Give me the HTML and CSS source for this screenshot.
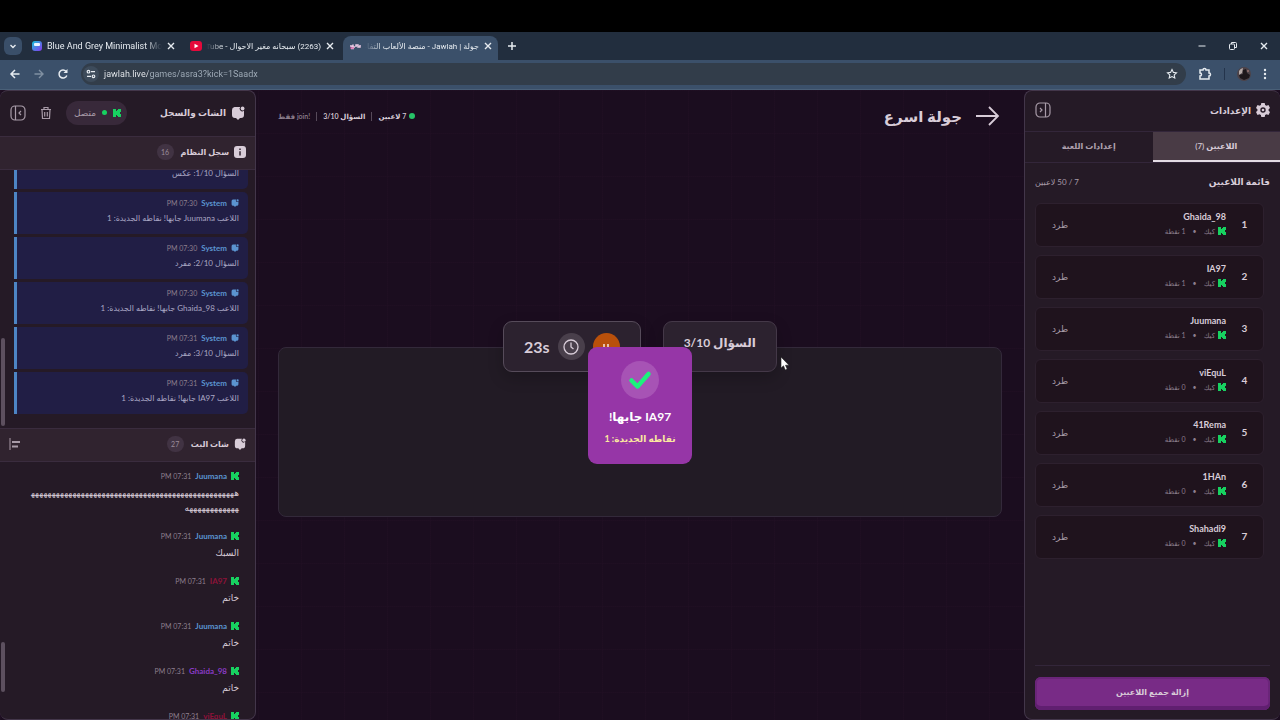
FILE: index.html
```
<!DOCTYPE html>
<html lang="ar" dir="rtl">

<head>
    <meta charset="UTF-8">
    <meta name="viewport" content="width=device-width, initial-scale=1.0">
    <title>جولة | Jawlah - منصة الألعاب التفاعلية</title>
    <link rel="stylesheet" href="styles.css">
</head>

<body>
    <svg class="sprite" aria-hidden="true">
        <symbol id="kick" viewBox="0 0 8 8"><path fill="#17d160" d="M0 0h3v2h1V1h1V0h3v3H7v1H6v0h1v1h1v3H5V7H4V6H3v2H0z"/></symbol>
        <symbol id="chat" viewBox="0 0 14 14"><path fill="currentColor" d="M3.500 1h5.800a2.300 2.300 0 0 0 3.700 3.500V9a3 3 0 0 1-3 3H9l-2 2-2-2H4a3 3 0 0 1-3-3V4a3 3 0 0 1 2.500-3z"/><circle cx="11.600" cy="2.500" r="1.900" fill="currentColor"/></symbol>
        <symbol id="close" viewBox="0 0 10 10"><path d="M2 2l6 6M8 2l-6 6" stroke="currentColor" stroke-width="1.400" fill="none"/></symbol>
        <symbol id="panel" viewBox="0 0 16 16"><g fill="none" stroke="currentColor" stroke-width="1.200"><rect x="1" y="1" width="14" height="14" rx="4"/><path d="M10.500 1v14M5 6l2 2-2 2"/></g></symbol>
    </svg>

    <div class="top-space"></div>

    <div class="tab-strip" dir="ltr">
        <button class="tab-search" aria-label="Search tabs"><svg width="10" height="10" viewBox="0 0 10 10"><path d="M2.500 4L5 6.500 7.500 4" fill="none" stroke="currentColor" stroke-width="1.400"/></svg></button>
        <div class="tab">
            <svg class="favicon" viewBox="0 0 12 12"><defs><linearGradient id="fav" x1="0" y1="0" x2="1" y2="1"><stop offset="0" stop-color="#12c7d8"/><stop offset="1" stop-color="#8b35f0"/></linearGradient></defs><rect x="1" y="1" width="10" height="10" rx="3" fill="url(#fav)"/><rect x="3" y="3" width="6" height="3" rx="1" fill="#e8f4ff"/></svg>
            <span class="tab-title" dir="ltr">Blue And Grey Minimalist Modern</span>
            <button class="tab-close" aria-label="Close"><svg width="10" height="10"><use href="#close"/></svg></button>
        </div>
        <div class="tab second">
            <svg class="favicon" viewBox="0 0 12 12"><rect x="0" y="1" width="12" height="10" rx="3" fill="#e5093b"/><path d="M4.500 3.700v4.600L8.500 6z" fill="#fff"/></svg>
            <span class="tab-title" dir="rtl">(2263) سبحانه مغير الاحوال - YouTube</span>
            <button class="tab-close" aria-label="Close"><svg width="10" height="10"><use href="#close"/></svg></button>
        </div>
        <div class="tab active">
            <svg class="favicon" viewBox="0 0 12 12"><path d="M1 6h2v1.500M4 4.500v2.500h2M7 7V5h2v2h2V5M2 8.500h3" fill="none" stroke="#e9c9e4" stroke-width="1.500"/><path d="M1 8h4" stroke="#d84a9a"/></svg>
            <span class="tab-title" dir="rtl">جولة | Jawlah - منصة الألعاب التفاعلية</span>
            <button class="tab-close" aria-label="Close"><svg width="10" height="10"><use href="#close"/></svg></button>
        </div>
        <button class="new-tab" aria-label="New tab"><svg width="12" height="12" viewBox="0 0 12 12"><path d="M6 2v8M2 6h8" stroke="currentColor" stroke-width="1.500"/></svg></button>
        <div class="window-buttons">
            <button aria-label="Minimize"><svg width="10" height="10" viewBox="0 0 10 10"><path d="M1.500 5h7" stroke="currentColor"/></svg></button>
            <button aria-label="Restore"><svg width="10" height="10" viewBox="0 0 10 10"><g fill="none" stroke="currentColor"><rect x="1.500" y="3" width="5" height="5.500" rx="1"/><path d="M3.500 3V1.500h4a1 1 0 0 1 1 1v4H7"/></g></svg></button>
            <button aria-label="Close window"><svg width="10" height="10"><use href="#close"/></svg></button>
        </div>
    </div>

    <div class="toolbar" dir="ltr">
        <button aria-label="Back"><svg width="12" height="12" viewBox="0 0 12 12"><path d="M10.500 6H2M6 2L2 6l4 4" fill="none" stroke="currentColor" stroke-width="1.500"/></svg></button>
        <button class="dim" aria-label="Forward"><svg width="12" height="12" viewBox="0 0 12 12"><path d="M1.500 6H10M6 2l4 4-4 4" fill="none" stroke="currentColor" stroke-width="1.400"/></svg></button>
        <button aria-label="Reload"><svg width="12" height="12" viewBox="0 0 12 12"><path d="M9.800 7.500A4 4 0 1 1 9 3.300" fill="none" stroke="currentColor" stroke-width="1.500"/><path d="M10.500 1v4h-4z" fill="currentColor"/></svg></button>
        <div class="address">
            <button class="site-info" aria-label="Site information"><svg width="10" height="10" viewBox="0 0 10 10"><g fill="none" stroke="currentColor" stroke-width="1.200"><circle cx="2.500" cy="2.700" r="1.300"/><path d="M5 2.700h4M1 7.300h4"/><circle cx="7.500" cy="7.300" r="1.300"/></g></svg></button>
            <input class="url" type="text" aria-label="Address" value="jawlah.live/games/asra3?kick=1Saadx">
            <button aria-label="Bookmark"><svg width="12" height="12" viewBox="0 0 12 12"><path d="M6 1.500l1.400 2.900 3.100.4-2.300 2.100.6 3.100L6 8.500 3.200 10l.6-3.100L1.500 4.800l3.100-.4z" fill="none" stroke="currentColor" stroke-width="1.100"/></svg></button>
        </div>
        <button aria-label="Extensions"><svg width="14" height="14" viewBox="0 0 14 14"><path d="M2 3h3a1.500 1.500 0 0 1 3 0h3v3a1.500 1.500 0 0 1 0 3v3H2V9a1.500 1.500 0 0 0 0-3z" fill="none" stroke="currentColor" stroke-width="1.500"/></svg></button>
        <span class="toolbar-line"></span>
        <button aria-label="Profile"><svg width="14" height="14" viewBox="0 0 14 14"><circle cx="7" cy="7" r="7" fill="#4c4248"/><path d="M2 4a6 6 0 0 1 4-3l-1 5-3 2z" fill="#b5aaa8"/><path d="M6 3l3-1 1 4 3 2-1 3-5 2-4-2-1-3 4-1z" fill="#1d171b"/><circle cx="11" cy="4" r="1" fill="#93706e"/></svg></button>
        <button aria-label="Menu"><svg width="4" height="12" viewBox="0 0 4 12"><g fill="currentColor"><circle cx="2" cy="2" r="1.200"/><circle cx="2" cy="6" r="1.200"/><circle cx="2" cy="10" r="1.200"/></g></svg></button>
    </div>

    <div class="app">
        <aside class="side settings">
            <header class="side-header">
                <h2><svg width="14" height="14" viewBox="0 0 14 14"><path fill="currentColor" fill-rule="evenodd" d="M5.300 0h3.400l.4 2 1.400.8 2-.7 1.500 2.800L12.600 6.200v1.600L14 9.100l-1.500 2.800-2-.7-1.400.8-.4 2H5.300l-.4-2-1.400-.8-2 .7L0 9.100l1.400-1.300V6.200L0 4.900l1.500-2.800 2 .7L4.900 2zM7 4.300a2.700 2.700 0 1 0 0 5.400 2.700 2.700 0 0 0 0-5.400z"/><circle cx="7" cy="7" r="1.300" fill="currentColor"/></svg>الإعدادات</h2>
                <button class="icon-button" aria-label="طي"><svg width="16" height="16"><use href="#panel"/></svg></button>
            </header>
            <div class="settings-tabs" role="tablist">
                <button class="selected" role="tab" aria-selected="true">اللاعبين (7)</button>
                <button role="tab" aria-selected="false">إعدادات اللعبة</button>
            </div>
            <div class="list-title">
                <h3>قائمة اللاعبين</h3>
                <span>7 / 50 لاعبين</span>
            </div>
            <ol class="players">
                <li class="player"><b class="rank">1</b><div class="who"><strong>Ghaida_98</strong><small><svg><use href="#kick"/></svg>كيك <i>•</i> 1 نقطة</small></div><button>طرد</button></li>
                <li class="player"><b class="rank">2</b><div class="who"><strong>IA97</strong><small><svg><use href="#kick"/></svg>كيك <i>•</i> 1 نقطة</small></div><button>طرد</button></li>
                <li class="player"><b class="rank">3</b><div class="who"><strong>Juumana</strong><small><svg><use href="#kick"/></svg>كيك <i>•</i> 1 نقطة</small></div><button>طرد</button></li>
                <li class="player"><b class="rank">4</b><div class="who"><strong>viEquL</strong><small><svg><use href="#kick"/></svg>كيك <i>•</i> 0 نقطة</small></div><button>طرد</button></li>
                <li class="player"><b class="rank">5</b><div class="who"><strong>41Rema</strong><small><svg><use href="#kick"/></svg>كيك <i>•</i> 0 نقطة</small></div><button>طرد</button></li>
                <li class="player"><b class="rank">6</b><div class="who"><strong>1HAn</strong><small><svg><use href="#kick"/></svg>كيك <i>•</i> 0 نقطة</small></div><button>طرد</button></li>
                <li class="player"><b class="rank">7</b><div class="who"><strong>Shahadi9</strong><small><svg><use href="#kick"/></svg>كيك <i>•</i> 0 نقطة</small></div><button>طرد</button></li>
            </ol>
            <footer class="side-footer">
                <button class="remove-all">إزالة جميع اللاعبين</button>
            </footer>
        </aside>

        <main class="game">
            <header class="game-header">
                <h1><svg width="26" height="22" viewBox="0 0 26 22"><path d="M2 11h22M15 2l9 9-9 9" fill="none" stroke="currentColor" stroke-width="1.800"/></svg>جولة اسرع</h1>
                <div class="game-info">
                    <span class="online">7 لاعبين</span>
                    <span>السؤال 3/10</span>
                    <span class="muted">!join فقط</span>
                </div>
            </header>
            <div class="stage">
                <div class="stats">
                    <div class="stat question">السؤال 3/10</div>
                    <div class="stat timer">
                        <button class="pause" aria-label="إيقاف مؤقت"><svg width="8" height="8" viewBox="0 0 8 8"><path d="M2 1v6M6 1v6" stroke="#f3ddd0" stroke-width="1.600"/></svg></button>
                        <span class="clock"><svg width="18" height="18" viewBox="0 0 18 18"><g fill="none" stroke="currentColor" stroke-width="1.300"><circle cx="9" cy="9" r="7"/><path d="M9 4.500V9l2.500 2"/></g></svg></span>
                        <span dir="ltr">23s</span>
                    </div>
                </div>
                <div class="board">
                    <p class="word">مفرد</p>
                    <div class="popup">
                        <span class="check"><svg width="24" height="20" viewBox="0 0 24 20"><path d="M3.500 10.500l6 6L20.500 4" fill="none" stroke="#1cf27c" stroke-width="4.500" stroke-linecap="round" stroke-linejoin="round"/></svg></span>
                        <strong>IA97 جابها!</strong>
                        <em>نقاطه الجديدة: 1</em>
                    </div>
                </div>
            </div>
        </main>

        <aside class="side chat">
            <header class="side-header">
                <h2><svg width="14" height="14"><use href="#chat"/></svg>الشات والسجل</h2>
                <div class="actions">
                    <span class="status"><svg width="8" height="8"><use href="#kick"/></svg><i></i>متصل</span>
                    <button class="icon-button" aria-label="مسح"><svg width="12" height="14" viewBox="0 0 12 14"><g fill="none" stroke="currentColor" stroke-width="1.200"><path d="M1 3.500h10M4 3.500V1.500h4v2M2 3.500l.5 9h7l.5-9M4.700 6v4.500M7.300 6v4.500"/></g></svg></button>
                    <button class="icon-button flip" aria-label="طي"><svg width="16" height="16"><use href="#panel"/></svg></button>
                </div>
            </header>
            <div class="section-title">
                <h3><svg width="12" height="12" viewBox="0 0 12 12"><rect width="12" height="12" rx="3" fill="currentColor"/><path d="M6 2.500v1.500M6 5.200v4.300" stroke="#30232f" stroke-width="1.500"/></svg>سجل النظام</h3>
                <span class="count">16</span>
            </div>
            <div class="log">
                <article><div class="meta"><svg><use href="#chat"/></svg><b>System</b><time>07:30 PM</time></div><p>السؤال 1/10: عكس</p></article>
                <article><div class="meta"><svg><use href="#chat"/></svg><b>System</b><time>07:30 PM</time></div><p>اللاعب Juumana جابها! نقاطه الجديدة: 1</p></article>
                <article><div class="meta"><svg><use href="#chat"/></svg><b>System</b><time>07:30 PM</time></div><p>السؤال 2/10: مفرد</p></article>
                <article><div class="meta"><svg><use href="#chat"/></svg><b>System</b><time>07:30 PM</time></div><p>اللاعب Ghaida_98 جابها! نقاطه الجديدة: 1</p></article>
                <article><div class="meta"><svg><use href="#chat"/></svg><b>System</b><time>07:31 PM</time></div><p>السؤال 3/10: مفرد</p></article>
                <article><div class="meta"><svg><use href="#chat"/></svg><b>System</b><time>07:31 PM</time></div><p>اللاعب IA97 جابها! نقاطه الجديدة: 1</p></article>
                <span class="thumb"></span>
            </div>
            <div class="section-title">
                <h3><svg width="12" height="12"><use href="#chat"/></svg>شات البث</h3>
                <span class="count">27</span>
                <button class="icon-button align" aria-label="محاذاة"><svg width="12" height="12" viewBox="0 0 12 12"><path d="M1 0v12" stroke="currentColor"/><path d="M3 4h8M3 8.500h6" stroke="currentColor" stroke-width="2"/></svg></button>
            </div>
            <div class="messages">
                <article><div class="meta"><svg><use href="#kick"/></svg><b>Juumana</b><time>07:31 PM</time></div><p>ههههههههههههههههههههههههههههههههههههههههههههههههههههههههههههههه</p></article>
                <article><div class="meta"><svg><use href="#kick"/></svg><b>Juumana</b><time>07:31 PM</time></div><p>السبك</p></article>
                <article><div class="meta"><svg><use href="#kick"/></svg><b class="red">IA97</b><time>07:31 PM</time></div><p>خاتم</p></article>
                <article><div class="meta"><svg><use href="#kick"/></svg><b>Juumana</b><time>07:31 PM</time></div><p>خاتم</p></article>
                <article><div class="meta"><svg><use href="#kick"/></svg><b class="purple">Ghaida_98</b><time>07:31 PM</time></div><p>خاتم</p></article>
                <article><div class="meta"><svg><use href="#kick"/></svg><b class="red">viEquL</b><time>07:31 PM</time></div></article>
                <span class="thumb"></span>
            </div>
        </aside>
    </div>

    <svg class="pointer" width="12" height="16" viewBox="0 0 12 16"><path d="M1 1v11l2.500-2.200L5.200 14l2-.9-1.700-3.900H9z" fill="#fff" stroke="#222" stroke-width=".6"/></svg>
</body>

</html>
```

FILE: styles.css
```
* {
    box-sizing: border-box;
}

body {
    margin: 0;
    height: 100vh;
    display: flex;
    flex-direction: column;
    overflow: hidden;
    background: #000;
    color: #d8ccd8;
    font-family: Lato, "DejaVu Sans", sans-serif;
    font-size: 9px;
}

h1, h2, h3, p, ol {
    margin: 0;
    padding: 0;
}

button {
    border: none;
    padding: 0;
    background: none;
    color: inherit;
    font: inherit;
    cursor: pointer;
}

svg {
    display: block;
    flex: none;
}

.sprite {
    position: absolute;
    width: 0;
    height: 0;
}

/* browser window */
.top-space {
    height: 32px;
    flex: none;
}

.tab-strip {
    flex: none;
    height: 28px;
    display: flex;
    align-items: flex-end;
    padding-left: 4px;
    background: #222e3e;
    color: #e6ebf0;
    font-family: Roboto, "DejaVu Sans", sans-serif;
}

.tab-search {
    width: 18px;
    height: 18px;
    margin: 0 3px 5px 0;
    display: grid;
    place-items: center;
    border-radius: 6px;
    background: #3a4f69;
}

.tab {
    width: 159px;
    height: 24px;
    display: flex;
    align-items: center;
    gap: 4px;
    padding: 0 8px 4px 6px;
}

.tab.active {
    width: 155px;
    padding-right: 5px;
    border-radius: 8px 8px 0 0;
    background: #3b506a;
}

.favicon {
    width: 12px;
    height: 12px;
}

.tab-title {
    flex: 1;
    overflow: hidden;
    white-space: nowrap;
    -webkit-mask-image: linear-gradient(to right, #000 85%, transparent);
    mask-image: linear-gradient(to right, #000 85%, transparent);
}

.tab-title[dir="rtl"] {
    font-size: 8px;
    -webkit-mask-image: linear-gradient(to left, #000 85%, transparent);
    mask-image: linear-gradient(to left, #000 85%, transparent);
}

.new-tab {
    margin: 0 8px 8px;
}

.window-buttons {
    display: flex;
    gap: 21px;
    margin: 0 11px 9px auto;
}

.toolbar {
    flex: none;
    height: 30px;
    display: flex;
    align-items: center;
    gap: 12px;
    padding: 0 13px 2px 9px;
    background: #3b506a;
    border-bottom: 1px solid #4a6078;
    color: #e6ebf0;
}

.dim {
    color: #8090a2;
}

.address {
    flex: 1;
    height: 22px;
    display: flex;
    align-items: center;
    padding: 0 8px 0 2px;
    border-radius: 11px;
    background: #323d4a;
}

.site-info {
    width: 16px;
    height: 16px;
    display: grid;
    place-items: center;
    border-radius: 8px;
    background: #3d4b5b;
}

.url {
    flex: 1;
    min-width: 0;
    border: none;
    outline: none;
    padding: 0 5px;
    background: linear-gradient(to right, #f0f3f6 49px, #a4b0bc 49px);
    -webkit-background-clip: text;
    background-clip: text;
    color: transparent;
    font-family: Roboto, sans-serif;
    font-size: 9px;
}

.toolbar-line {
    width: 1px;
    height: 12px;
    background: #24344c;
}

/* page */
.app {
    flex: 1;
    min-height: 0;
    display: grid;
    grid-template-columns: 256px 1fr 256px;
    background-color: #1b0d1f;
    background-image:
        linear-gradient(rgba(90, 50, 90, 0.05) 1px, transparent 1px),
        linear-gradient(90deg, rgba(90, 50, 90, 0.05) 1px, transparent 1px);
    background-size: 43px 43px;
}

.side {
    min-height: 0;
    display: flex;
    flex-direction: column;
    overflow: hidden;
    border: 1px solid #43364a;
    border-radius: 8px;
    background: #251a26;
}

.side.chat {
    border-left: none;
}

.side.settings {
    border-right: none;
}

.side-header {
    flex: none;
    height: 40px;
    display: flex;
    align-items: center;
    justify-content: space-between;
    padding: 0 10px 2px;
}

.side-header h2,
.section-title h3 {
    display: flex;
    align-items: center;
    gap: 5px;
    font-size: 9px;
}

.chat .side-header {
    height: 45px;
}

.icon-button {
    color: #a89ba8;
}

.flip {
    transform: scaleX(-1);
}

.actions {
    display: flex;
    align-items: center;
    gap: 14px;
}

.status {
    height: 24px;
    display: flex;
    align-items: center;
    gap: 6px;
    padding: 0 6px 0 8px;
    border-radius: 12px;
    background: #38293a;
    color: #a89ba8;
}

.status i {
    width: 5px;
    height: 5px;
    border-radius: 50%;
    background: #17d160;
}

/* settings */
.settings-tabs {
    flex: none;
    height: 32px;
    display: flex;
    border-top: 1px solid #33263a;
    border-bottom: 1px solid #33263a;
}

.settings-tabs button {
    flex: 1;
    padding-bottom: 2px;
    color: #b0a2b0;
    font-size: 8px;
    font-weight: 600;
}

.settings-tabs .selected {
    padding-bottom: 0;
    background: #493b45;
    border-bottom: 2px solid #e4dce4;
    color: #d8ccd8;
}

.list-title {
    height: 40px;
    flex: none;
    display: flex;
    align-items: center;
    justify-content: space-between;
    padding: 0 10px 3px;
    color: #a89ba8;
    font-size: 8px;
}

.list-title h3 {
    color: #d8ccd8;
    font-size: 9px;
}

.players {
    flex: 1;
    display: flex;
    flex-direction: column;
    gap: 8px;
    padding: 0 16px 0 10px;
    list-style: none;
}

.player {
    height: 44px;
    display: flex;
    align-items: center;
    padding: 0 12px 2px;
    border: 1px solid #2d202e;
    border-radius: 6px;
    background: #1f131d;
}

.rank {
    width: 13px;
    text-align: center;
    font-size: 10px;
}

.who {
    flex: 1;
    display: flex;
    flex-direction: column;
    padding-right: 12px;
}

.who strong {
    line-height: 14px;
    font-weight: 700;
}

.who small {
    display: flex;
    align-items: center;
    gap: 3px;
    line-height: 14px;
    font-size: 7px;
    color: #8d7f8d;
}

.who svg {
    width: 8px;
    height: 8px;
}

.who i {
    padding: 0 4px;
    font-style: normal;
}

.player button {
    padding: 0 4px;
    color: #a89ba8;
}

.side-footer {
    margin: 0 10px;
    padding: 11px 0 9px;
    border-top: 1px solid #33263a;
}

.remove-all {
    width: 100%;
    height: 33px;
    padding-bottom: 4px;
    border-radius: 6px;
    background: #782b86;
    box-shadow: inset 0 -4px #601f70, inset 0 0 0 2px #6a2579;
    font-size: 8px;
    font-weight: 600;
}

/* game */
.game {
    display: flex;
    flex-direction: column;
    padding: 0 22px;
}

.game-header {
    flex: none;
    height: 52px;
    display: flex;
    align-items: center;
    justify-content: space-between;
    padding-right: 2px;
}

.game-header h1 {
    display: flex;
    align-items: center;
    gap: 12px;
    font-size: 15px;
    font-weight: 600;
}

.game-info {
    display: flex;
    align-items: center;
    font-size: 7px;
    font-weight: 600;
}

.game-info span + span {
    padding-right: 6px;
    margin-right: 6px;
    border-right: 1px solid #574a5a;
}

.game-info .muted {
    color: #8d7f8d;
}

.online::before {
    content: "";
    display: inline-block;
    width: 6px;
    height: 6px;
    margin-left: 3px;
    border-radius: 50%;
    background: #27c368;
}

.stage {
    flex: 1;
    display: flex;
    flex-direction: column;
    justify-content: center;
    padding-bottom: 24px;
}

.stats {
    position: relative;
    z-index: 1;
    display: flex;
    justify-content: center;
    gap: 22px;
    margin-bottom: -25px;
}

.stat {
    height: 51px;
    display: flex;
    align-items: center;
    gap: 8px;
    padding: 0 20px;
    border: 1px solid #443848;
    border-radius: 9px;
    background: #2c222f;
    box-shadow: 0 6px 16px rgba(0, 0, 0, 0.2);
    font-weight: 700;
}

.question {
    padding-bottom: 8px;
    font-size: 12px;
}

.timer {
    border-color: #564b5a;
    font-size: 16px;
}

.pause,
.clock {
    width: 27px;
    height: 27px;
    display: grid;
    place-items: center;
    border-radius: 50%;
}

.pause {
    background: #b9500b;
}

.clock {
    background: #493f4b;
}

.board {
    position: relative;
    height: 170px;
    padding-top: 87px;
    border: 1px solid #33293a;
    border-radius: 8px;
    background: #221b25;
    text-align: center;
}

.word {
    color: #fff;
    font-size: 14px;
    font-weight: 600;
    line-height: 36px;
}

.popup {
    position: absolute;
    z-index: 2;
    top: -1px;
    left: 50%;
    transform: translateX(-50%);
    width: 104px;
    height: 117px;
    display: flex;
    flex-direction: column;
    align-items: center;
    padding-top: 14px;
    border-radius: 9px;
    background: #9636a7;
    color: #fff;
    white-space: nowrap;
}

.check {
    width: 38px;
    height: 38px;
    display: grid;
    place-items: center;
    border-radius: 50%;
    background: #a753b5;
}

.popup strong {
    margin-top: 8px;
    font-size: 12px;
    line-height: 20px;
}

.popup em {
    margin-top: 4px;
    color: #fbe9a0;
    font-size: 9px;
    font-style: normal;
    font-weight: 700;
    line-height: 16px;
}

/* log and chat */
.section-title {
    flex: none;
    height: 34px;
    display: flex;
    align-items: center;
    gap: 7px;
    padding: 0 9px 2px;
    border-top: 1px solid #3a2c3e;
    border-bottom: 1px solid #3a2c3e;
    background: #30232f;
}

.section-title h3 {
    font-size: 8px;
}

.count {
    width: 17px;
    height: 16px;
    border-radius: 8px;
    background: #413343;
    color: #9a8c9a;
    font-size: 7px;
    line-height: 16px;
    text-align: center;
}

.align {
    margin-right: auto;
}

.log,
.messages {
    position: relative;
    display: flex;
    flex-direction: column;
    overflow: hidden;
}

.log {
    flex: none;
    height: 258px;
    justify-content: flex-end;
    gap: 3px;
    padding: 0 7px 14px 14px;
}

.log article {
    flex: none;
    height: 42px;
    padding: 2px 9px;
    border-left: 3px solid #4d85c4;
    border-radius: 0 5px 5px 0;
    background: #211e45;
    color: #aaa7c4;
    font-size: 8px;
}

.log p {
    margin-top: -1px;
}

.messages {
    flex: 1;
    min-height: 0;
    padding: 0 16px 0 27px;
}

.messages article {
    flex: none;
    padding: 5px 0 7px;
}

.meta {
    height: 18px;
    display: flex;
    align-items: center;
    gap: 4px;
    font-size: 8px;
    color: #5b94d0;
}

.meta svg {
    width: 8px;
    height: 8px;
}

.meta b {
    font-weight: 700;
}

.meta .red {
    color: #8e1239;
}

.meta .purple {
    color: #8a3bc4;
}

.meta time {
    color: #8d7f8d;
    font-size: 7px;
}

.log p,
.messages p {
    line-height: 15px;
    word-break: break-all;
}

.thumb {
    position: absolute;
    left: 1px;
    width: 4px;
    border-radius: 2px;
    background: #5d505f;
}

.log .thumb {
    top: 168px;
    height: 88px;
}

.messages .thumb {
    top: 180px;
    height: 50px;
}

.pointer {
    position: absolute;
    left: 780px;
    top: 356px;
    z-index: 5;
}
```
